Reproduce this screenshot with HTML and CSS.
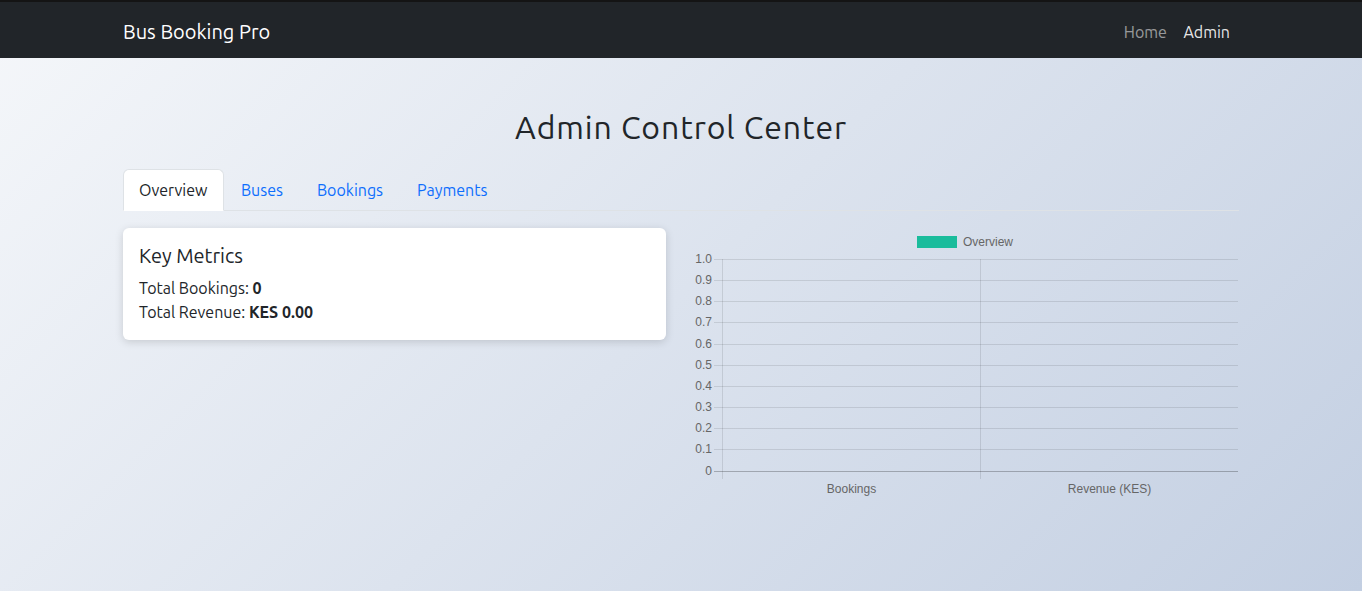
FILE: index.html
```html
<!DOCTYPE html>
<html lang="en">
<head>
<meta charset="utf-8">
<title>Admin Control Center</title>
<link rel="stylesheet" href="styles.css">
</head>
<body>
<div class="page">
  <div class="topline"></div>
  <nav class="navbar">
    <div class="container nav-inner">
      <a class="brand">Bus Booking Pro</a>
      <ul class="nav-links">
        <li><a class="nav-link">Home</a></li>
        <li><a class="nav-link active">Admin</a></li>
      </ul>
    </div>
  </nav>
  <main class="container main">
    <h1 class="title">Admin Control Center</h1>
    <ul class="tabs">
      <li><a class="tab active">Overview</a></li>
      <li><a class="tab">Buses</a></li>
      <li><a class="tab">Bookings</a></li>
      <li><a class="tab">Payments</a></li>
    </ul>
    <div class="row">
      <div class="col">
        <div class="card">
          <h5 class="card-title">Key Metrics</h5>
          <p class="metric">Total Bookings: <strong>0</strong></p>
          <p class="metric last">Total Revenue: <strong>KES 0.00</strong></p>
        </div>
      </div>
      <div class="col">
        <svg class="chart" viewBox="0 0 546 273" width="546" height="273">
          <rect x="224" y="8" width="40" height="12" fill="#1abc9c"/>
          <text x="270" y="17.5" class="lbl">Overview</text>
          <g class="grid">
            <line x1="21" y1="31.5" x2="545" y2="31.5"/>
            <line x1="21" y1="52.5" x2="545" y2="52.5"/>
            <line x1="21" y1="73.5" x2="545" y2="73.5"/>
            <line x1="21" y1="94.5" x2="545" y2="94.5"/>
            <line x1="21" y1="116.5" x2="545" y2="116.5"/>
            <line x1="21" y1="137.5" x2="545" y2="137.5"/>
            <line x1="21" y1="158.5" x2="545" y2="158.5"/>
            <line x1="21" y1="179.5" x2="545" y2="179.5"/>
            <line x1="21" y1="200.5" x2="545" y2="200.5"/>
            <line x1="21" y1="221.5" x2="545" y2="221.5"/>
            <line x1="29.5" y1="31" x2="29.5" y2="251"/>
            <line x1="287.5" y1="31" x2="287.5" y2="251"/>
          </g>
          <line class="zero" x1="21" y1="243.5" x2="545" y2="243.5"/>
          <g class="ylbl">
            <text x="19" y="35">1.0</text>
            <text x="19" y="56">0.9</text>
            <text x="19" y="77">0.8</text>
            <text x="19" y="98">0.7</text>
            <text x="19" y="120">0.6</text>
            <text x="19" y="141">0.5</text>
            <text x="19" y="162">0.4</text>
            <text x="19" y="183">0.3</text>
            <text x="19" y="204">0.2</text>
            <text x="19" y="225">0.1</text>
            <text x="19" y="247">0</text>
          </g>
          <g class="xlbl">
            <text x="158.5" y="265">Bookings</text>
            <text x="416.5" y="265">Revenue (KES)</text>
          </g>
        </svg>
      </div>
    </div>
  </main>
</div>
</body>
</html>
```
FILE: styles.css
```css
* { box-sizing: border-box; }
html, body { margin: 0; padding: 0; }
body {
  font-family: "Ubuntu", "Lato", "Noto Sans", sans-serif;
  font-size: 16px;
  line-height: 1.5;
  color: #212529;
}
.page {
  min-height: 100vh;
  background: linear-gradient(135deg, #f5f7fa 0%, #c3cfe2 100%);
}
.topline { height: 2px; background: #141414; }
.container {
  width: 1140px;
  margin: 0 auto;
  padding: 0 12px;
}
.navbar {
  background: #212529;
  height: 56px;
}
.nav-inner {
  height: 56px;
  display: flex;
  align-items: center;
  justify-content: space-between;
  padding-top: 3px;
}
.brand {
  font-size: 20px;
  color: #fff;
  line-height: 30px;
}
.nav-links {
  list-style: none;
  margin: 0 1px 0 0;
  padding: 0;
  display: flex;
}
.nav-link {
  display: block;
  padding: 8px 8px 8px 8.5px;
  color: rgba(255,255,255,.55);
}
.nav-link.active { color: rgba(255,255,255,.9); }
.main { padding-top: 49px; }
.title {
  margin: 1px 0 23px;
  text-align: center;
  font-size: 32px;
  font-weight: 400;
  line-height: 1.2;
  letter-spacing: 0.9px;
}
.tabs {
  list-style: none;
  margin: 0;
  padding: 0;
  display: flex;
  border-bottom: 1px solid #dee2e6;
}
.tab {
  display: block;
  padding: 8px 16px;
  margin-bottom: -1px;
  border: 1px solid transparent;
  border-radius: 6px 6px 0 0;
  color: #0d6efd;
}
.tab.active {
  background: #fff;
  border-color: #dee2e6 #dee2e6 #fff;
  color: #212529;
  padding-left: 15px;
  padding-right: 15.5px;
}
.row {
  display: flex;
  margin: 17px -12px 0;
}
.col {
  flex: 0 0 50%;
  padding: 0 12px;
}
.card {
  background: #fff;
  border-radius: 6px;
  box-shadow: 0 2px 8px rgba(0,0,0,.15);
  padding: 16px;
  margin-right: 3px;
}
.card-title {
  margin: 0 0 8px;
  font-size: 20px;
  font-weight: 400;
  line-height: 1.2;
}
.metric { margin: 0; }
.metric strong { font-weight: 700; }
.chart { display: block; }
.chart text {
  font-family: "Liberation Sans", Arial, sans-serif;
  font-size: 12px;
  fill: #666;
}
.grid line { stroke: rgba(0,0,0,.1); stroke-width: 1; }
.zero { stroke: rgba(0,0,0,.25); stroke-width: 1; }
.ylbl text { text-anchor: end; }
.xlbl text { text-anchor: middle; }
```
